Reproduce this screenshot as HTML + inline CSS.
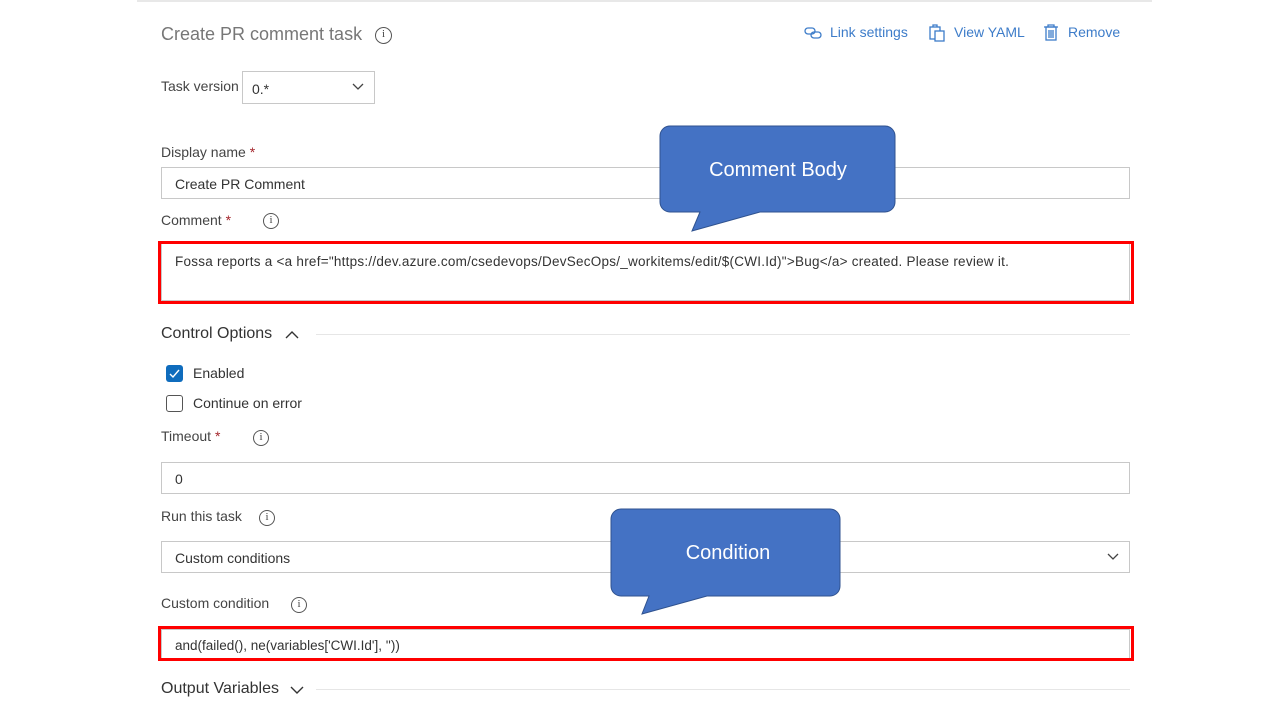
<!DOCTYPE html>
<html><head><meta charset="utf-8"><style>
*{box-sizing:border-box;margin:0;padding:0}
body{width:1280px;height:720px;background:#fff;position:relative;overflow:hidden;font-family:"Segoe UI","Liberation Sans",sans-serif;color:#333;font-size:14px}
.a{position:absolute;white-space:nowrap}
.inp{position:absolute;border:1px solid #c8c8c8;background:#fff;font-size:14px;color:#333;padding-left:13px;display:flex;align-items:center;padding-top:2px}
.lbl{font-size:14px;color:#444}
.star{color:#a4262c}
.info{position:absolute;width:16px;height:16px;border:1.3px solid #555;border-radius:50%;font-size:11px;line-height:13px;text-align:center;color:#444;font-family:"Liberation Serif",serif}
.red{position:absolute;border:3px solid #ff0000}
.blue{color:#3d7cc9;font-size:14px}
.hr{position:absolute;height:1px;background:#e6e6e6}
</style></head><body>
<div class="hr" style="left:137px;top:0;width:1015px;height:2px;background:#e8e8e8"></div>

<div class="a" style="left:161px;top:24px;font-size:18px;color:#777">Create PR comment task</div>
<div class="info" style="left:375px;top:27px;width:17px;height:17px">i</div>

<svg class="a" style="left:804px;top:25px" width="18" height="16" viewBox="0 0 18 16"><g fill="none" stroke="#3d7cc9" stroke-width="1.3"><rect x="1" y="3" width="10" height="6" rx="3"/><rect x="7" y="7" width="10" height="6" rx="3"/></g></svg>
<div class="a blue" style="left:830px;top:24px">Link settings</div>
<svg class="a" style="left:928px;top:23px" width="18" height="20" viewBox="0 0 18 20"><g fill="none" stroke="#3d7cc9" stroke-width="1.3"><rect x="2" y="4" width="10" height="12"/><rect x="7" y="8" width="9" height="10" fill="#fff"/><path d="M5 4V2h4v2"/></g></svg>
<div class="a blue" style="left:954px;top:24px">View YAML</div>
<svg class="a" style="left:1043px;top:23px" width="16" height="20" viewBox="0 0 16 20"><g fill="none" stroke="#3d7cc9" stroke-width="1.3"><path d="M1 4h14M5 4V2h6v2"/><rect x="3" y="4" width="10" height="13"/><path d="M6 7v8M8 7v8M10 7v8"/></g></svg>
<div class="a blue" style="left:1068px;top:24px">Remove</div>

<div class="a lbl" style="left:161px;top:78px">Task version</div>
<div class="inp" style="left:242px;top:71px;width:133px;height:33px;padding-left:9px">0.*</div>
<svg class="a" style="left:352px;top:83px" width="12" height="8"><path d="M1 1l5 5 5-5" fill="none" stroke="#444" stroke-width="1.3"/></svg>

<div class="a lbl" style="left:161px;top:144px">Display name <span class="star">*</span></div>
<div class="inp" style="left:161px;top:167px;width:969px;height:32px">Create PR Comment</div>

<div class="a lbl" style="left:161px;top:212px">Comment <span class="star">*</span></div>
<div class="info" style="left:263px;top:213px">i</div>
<div class="inp" style="left:161px;top:243px;width:969px;height:58px;align-items:flex-start;padding-top:10px;font-size:13.5px;letter-spacing:0.25px">Fossa reports a &lt;a href="https://dev.azure.com/csedevops/DevSecOps/_workitems/edit/$(CWI.Id)"&gt;Bug&lt;/a&gt; created. Please review it.</div>
<div class="red" style="left:158px;top:241px;width:976px;height:63px"></div>

<div class="a" style="left:161px;top:325px;font-size:16px;color:#333">Control Options</div>
<svg class="a" style="left:285px;top:330px" width="14" height="9"><path d="M1 8l6-6 6 6" fill="none" stroke="#333" stroke-width="1.4"/></svg>
<div class="hr" style="left:316px;top:334px;width:814px"></div>

<div class="a" style="left:166px;top:365px;width:17px;height:17px;background:#0f6cbd;border-radius:3px"></div>
<svg class="a" style="left:166px;top:365px" width="17" height="17"><path d="M4 9l3 3 6-7" fill="none" stroke="#fff" stroke-width="1.4"/></svg>
<div class="a" style="left:193px;top:365px">Enabled</div>
<div class="a" style="left:166px;top:395px;width:17px;height:17px;border:1.3px solid #555;border-radius:3px"></div>
<div class="a" style="left:193px;top:395px">Continue on error</div>

<div class="a lbl" style="left:161px;top:428px">Timeout <span class="star">*</span></div>
<div class="info" style="left:253px;top:430px">i</div>
<div class="inp" style="left:161px;top:462px;width:969px;height:32px">0</div>

<div class="a lbl" style="left:161px;top:508px">Run this task</div>
<div class="info" style="left:259px;top:510px">i</div>
<div class="inp" style="left:161px;top:541px;width:969px;height:32px">Custom conditions</div>
<svg class="a" style="left:1107px;top:553px" width="12" height="8"><path d="M1 1l5 5 5-5" fill="none" stroke="#444" stroke-width="1.3"/></svg>

<div class="a lbl" style="left:161px;top:595px">Custom condition</div>
<div class="info" style="left:291px;top:597px">i</div>
<div class="inp" style="left:161px;top:629px;width:969px;height:30px;font-size:13.5px">and(failed(), ne(variables['CWI.Id'], ''))</div>
<div class="red" style="left:158px;top:626px;width:976px;height:35px"></div>

<div class="a" style="left:161px;top:680px;font-size:16px;color:#333">Output Variables</div>
<svg class="a" style="left:290px;top:686px" width="14" height="9"><path d="M1 1l6 6 6-6" fill="none" stroke="#333" stroke-width="1.4"/></svg>
<div class="hr" style="left:316px;top:689px;width:814px"></div>

<svg class="a" style="left:0;top:0" width="1280" height="720">
<g fill="#4472c4" stroke="#2f528f" stroke-width="1">
<path d="M670 126h215a10 10 0 0 1 10 10v66a10 10 0 0 1-10 10H760L692 231l8-19h-30a10 10 0 0 1-10-10v-66a10 10 0 0 1 10-10z"/>
<path d="M621 509h209a10 10 0 0 1 10 10v67a10 10 0 0 1-10 10H707L642 614l7-18h-28a10 10 0 0 1-10-10v-67a10 10 0 0 1 10-10z"/>
</g>
<text x="778" y="176" fill="#fff" font-size="20" text-anchor="middle" font-family="Segoe UI,Liberation Sans,sans-serif">Comment Body</text>
<text x="728" y="559" fill="#fff" font-size="20" text-anchor="middle" font-family="Segoe UI,Liberation Sans,sans-serif">Condition</text>
</svg>
</body></html>
